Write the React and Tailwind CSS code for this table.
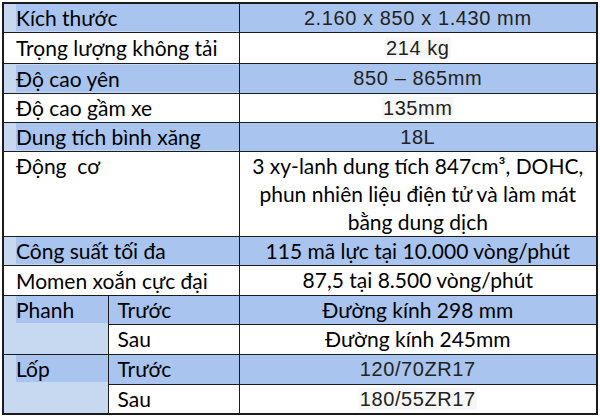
import React from "react";

const calibri = { fontFamily: "Lato, 'Noto Sans', sans-serif" };

const rows = [
  { label: "Kích thước", value: "2.160 x 850 x 1.430 mm", blue: true, arial: true, h: "h-[29px]" },
  { label: "Trọng lượng không tải", value: "214 kg", arial: true, h: "h-[31px]" },
  { label: "Độ cao yên", value: "850 – 865mm", blue: true, arial: true, h: "h-[30px]" },
  { label: "Độ cao gầm xe", value: "135mm", arial: true, h: "h-[29px]" },
  { label: "Dung tích bình xăng", value: "18L", blue: true, arial: true, h: "h-[29px]" },
];

const Label = ({ blue, children, top }) => (
  <td
    colSpan={2}
    className={`border border-[#1c1c1c] p-0 pl-[12px] ${top ? "align-top" : "align-middle"} ${blue ? "bg-[#c6d9f1]" : "bg-white"}`}
  >
    <div className={`h-full whitespace-pre text-[21px] leading-[27px] text-black ${blue ? "bg-[#a9c4ee]" : ""}`} style={calibri}>
      {children}
    </div>
  </td>
);

const Value = ({ blue, arial, children }) => (
  <td className={`border border-[#1c1c1c] p-0 text-center align-middle ${blue ? "bg-[#a9c4ee]" : "bg-white"}`}>
    {arial ? (
      <span className={`px-[1px] font-['Liberation_Sans',Arial,sans-serif] text-[20px] leading-[26px] tracking-[0.6px] text-[#222] ${blue ? "" : "bg-[#f7f7f7]"}`}>
        {children}
      </span>
    ) : (
      <span className="text-[21px] leading-[27px] text-black" style={calibri}>
        {children}
      </span>
    )}
  </td>
);

const App = () => {
  return (
    <div className="h-[419px] w-[600px] bg-white pl-[2px] pt-[2px]">
      <table className="w-[594px] table-fixed border-collapse border-2 border-[#1c1c1c]">
        <colgroup>
          <col className="w-[105px]" />
          <col className="w-[131px]" />
          <col className="w-[358px]" />
        </colgroup>
        <tbody>
          {rows.map((r) => (
            <tr key={r.label} className={r.h}>
              <Label blue={r.blue}>{r.label}</Label>
              <Value blue={r.blue} arial={r.arial}>{r.value}</Value>
            </tr>
          ))}

          {/* Engine row spans three lines */}
          <tr className="h-[85px]">
            <Label top>{"Động  cơ"}</Label>
            <td className="border border-[#1c1c1c] bg-white p-0 px-1 text-center align-middle">
              <div className="text-[21px] leading-[28px] text-black" style={calibri}>
                3 xy-lanh dung tích 847cm³, DOHC,
                <br />
                phun nhiên liệu điện tử và làm mát
                <br />
                bằng dung dịch
              </div>
            </td>
          </tr>
          <tr className="h-[29px]">
            <Label blue>Công suất tối đa</Label>
            <Value blue>115 mã lực tại 10.000 vòng/phút</Value>
          </tr>
          <tr className="h-[30px]">
            <Label>Momen xoắn cực đại</Label>
            <Value>87,5 tại 8.500 vòng/phút</Value>
          </tr>

          {/* Brakes */}
          <tr className="h-[29px]">
            <td rowSpan={2} className="border border-[#1c1c1c] bg-[#c6d9f1] p-0 pl-[12px] align-top">
              <div className="bg-[#a9c4ee] text-[21px] leading-[27px] text-black" style={calibri}>Phanh</div>
            </td>
            <td className="border border-[#1c1c1c] bg-[#a9c4ee] p-0 pl-[9px] align-middle">
              <span className="text-[21px] leading-[27px] text-black" style={calibri}>Trước</span>
            </td>
            <Value blue>Đường kính 298 mm</Value>
          </tr>
          <tr className="h-[30px]">
            <td className="border border-[#1c1c1c] bg-white p-0 pl-[9px] align-middle">
              <span className="text-[21px] leading-[27px] text-black" style={calibri}>Sau</span>
            </td>
            <Value>Đường kính 245mm</Value>
          </tr>

          {/* Tyres */}
          <tr className="h-[30px]">
            <td rowSpan={2} className="border border-[#1c1c1c] bg-[#c6d9f1] p-0 pl-[12px] align-top">
              <div className="bg-[#a9c4ee] text-[21px] leading-[27px] text-black" style={calibri}>Lốp</div>
            </td>
            <td className="border border-[#1c1c1c] bg-[#a9c4ee] p-0 pl-[9px] align-middle">
              <span className="text-[21px] leading-[27px] text-black" style={calibri}>Trước</span>
            </td>
            <Value blue arial>120/70ZR17</Value>
          </tr>
          <tr className="h-[29px]">
            <td className="border border-[#1c1c1c] bg-white p-0 pl-[9px] align-middle">
              <span className="text-[21px] leading-[27px] text-black" style={calibri}>Sau</span>
            </td>
            <Value arial>180/55ZR17</Value>
          </tr>
        </tbody>
      </table>
    </div>
  );
};

export default App;
